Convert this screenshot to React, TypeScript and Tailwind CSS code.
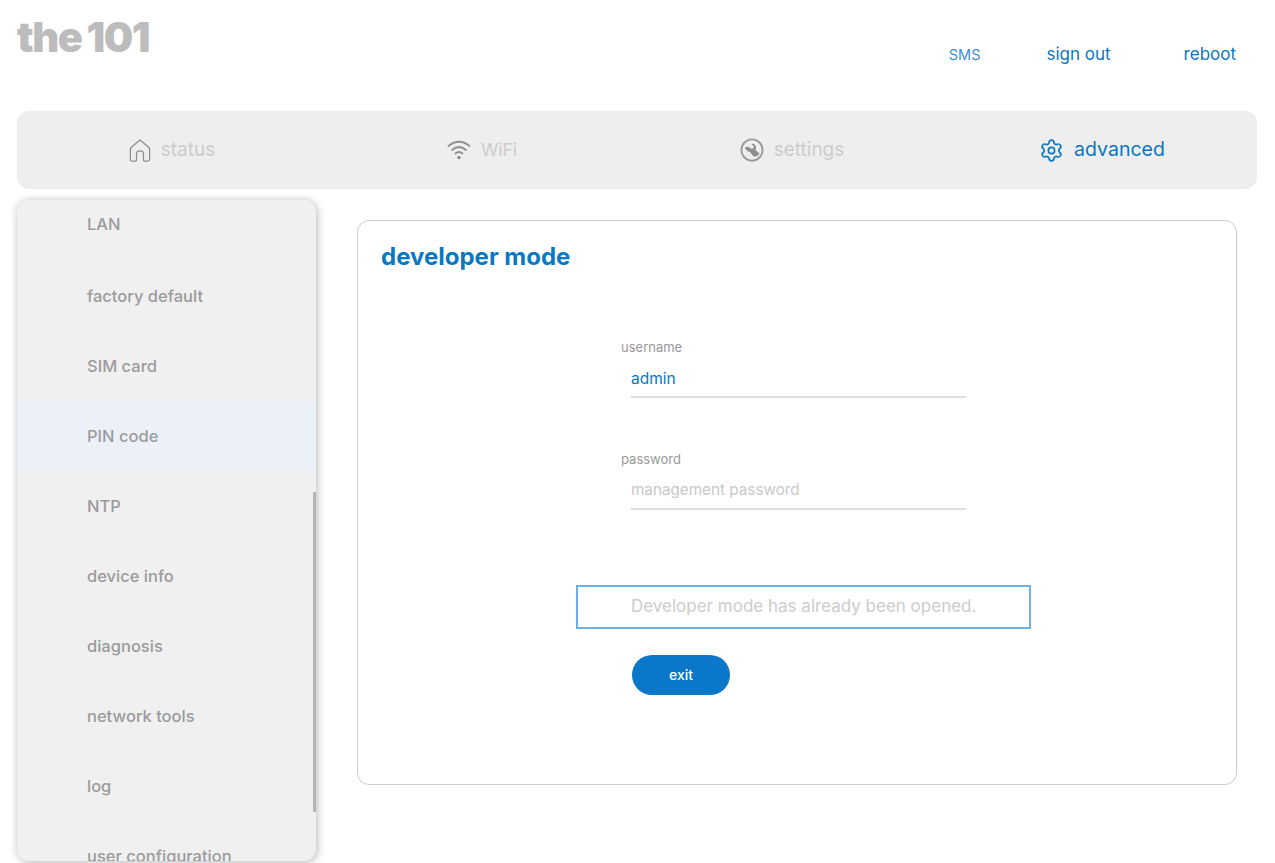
import { Settings } from "lucide-react";

const font = { fontFamily: '"Inter", "Open Sans", sans-serif' };

function HouseIcon() {
  return (
    <svg width="22" height="25" viewBox="0 0 24 26" fill="none" stroke="#8f8f8f" strokeWidth="1.4" strokeLinejoin="round" strokeLinecap="round">
      <path d="M12 1.5 L21.5 9.5 Q22.5 10.5 22.5 12 V22.5 Q22.5 24.5 20.5 24.5 H17 Q15.8 24.5 15.8 23.3 V16.5 Q15.8 13.5 12 13.5 Q8.2 13.5 8.2 16.5 V23.3 Q8.2 24.5 7 24.5 H3.5 Q1.5 24.5 1.5 22.5 V12 Q1.5 10.5 2.5 9.5 Z" />
    </svg>
  );
}

function WifiIcon() {
  return (
    <svg width="24" height="22" viewBox="0 0 24 22" fill="none" stroke="#8f8f8f" strokeWidth="1.8" strokeLinecap="round">
      <path d="M1.5 7 Q12 -1.5 22.5 7" />
      <path d="M5 11 Q12 5 19 11" />
      <path d="M8.5 14.5 Q12 11.5 15.5 14.5" />
      <circle cx="12" cy="18.5" r="1.8" fill="#8f8f8f" stroke="none" />
    </svg>
  );
}

function WrenchIcon() {
  return (
    <svg width="24" height="24" viewBox="0 0 24 24" fill="none">
      <circle cx="12" cy="12" r="10.6" stroke="#9a9a9a" strokeWidth="1.8" />
      <path d="M5 10 Q6.5 13.5 10 14 L13.5 18.5 Q17.5 19 19.5 15.5 L15.5 12 Q17 8.5 14.5 6.5 Q13 5.5 11.5 6 L14 9 L12 11 L8.5 9 Q5.5 8.2 5 10 Z" fill="#8f8f8f" />
    </svg>
  );
}

function NavItem({ icon, label, active = false, size = "text-[19px]" }: { icon: React.ReactNode; label: string; active?: boolean; size?: string }) {
  return (
    <div className="flex items-center justify-center gap-[10px]">
      {icon}
      <span className={`${size} ${active ? "text-[#0a77c2]" : "text-[#cccccc]"}`}>{label}</span>
    </div>
  );
}

const items = ["LAN", "factory default", "SIM card", "PIN code", "NTP", "device info", "diagnosis", "network tools", "log", "user configuration"];

function MenuRow({ label }: { label: string }) {
  const active = label === "PIN code";
  const first = label === "LAN";
  return (
    <div className={`flex items-center pl-[70px] text-[16.5px] font-medium text-[#9b9b9b] ${first ? "h-[72px] pb-[2px]" : "h-[70px]"} ${active ? "bg-[#ebf1f7]" : ""}`}>
      {label}
    </div>
  );
}

export default function App() {
  return (
    <div className="h-[863px] overflow-hidden bg-white" style={font}>
      <header className="flex h-[111px] justify-between pl-[17px] pr-[39px]">
        <div className="mt-[13px] flex h-[50px] items-center text-[41.5px] font-black leading-none tracking-[-1.5px] text-[#bcbcbc]">
          the<span className="ml-[5px]">101</span>
        </div>
        <nav className="mt-[44px] flex h-[22px] items-center text-[#0a77c2]">
          <span className="text-[14.5px] text-[#3b8fd3]">SMS</span>
          <span className="ml-[66px] text-[17px]">sign out</span>
          <span className="ml-[73px] text-[17px]">reboot</span>
        </nav>
      </header>

      <div className="mx-[17px] grid h-[78px] w-[1240px] grid-cols-4 rounded-xl bg-[#eeeeee]">
        <NavItem icon={<HouseIcon />} label="status" />
        <NavItem icon={<WifiIcon />} label="WiFi" size="text-[17.5px]" />
        <NavItem icon={<WrenchIcon />} label="settings" />
        <NavItem icon={<Settings size={25} strokeWidth={1.6} color="#0a77c2" />} label="advanced" active size="text-[19.5px]" />
      </div>

      <div className="ml-[17px] mt-[11px] flex items-start">
        <aside className="relative h-[661px] w-[299px] shrink-0 overflow-hidden rounded-xl bg-[#f0f0f0] shadow-[1px_1px_8px_rgba(0,0,0,0.3)]">
          <div className="-mt-[11px]">
            {items.map((label) => (
              <MenuRow key={label} label={label} />
            ))}
          </div>
          <div className="absolute right-0 top-[292px] h-[320px] w-[3px] bg-[#b5b5b5]" />
        </aside>

        <main className="ml-[41px] mt-[20px] h-[565px] w-[880px] rounded-xl border border-[#cccccc] bg-white">
          <h1 className="ml-[23px] mt-[20px] text-[24px] font-bold leading-[32px] text-[#0a77c2]">developer mode</h1>

          <form className="ml-[263px] mt-[64px] flex flex-col items-start">
            <label className="text-[13px] leading-[20px] text-[#999999]">username</label>
            <div className="ml-[10px] mt-[8px] flex h-[33px] w-[335px] items-center border-b-2 border-[#dddddd] pb-[4px] text-[15.5px] text-[#0a77c2]">
              admin
            </div>
            <label className="mt-[51px] text-[13px] leading-[20px] text-[#999999]">password</label>
            <div className="ml-[10px] mt-[8px] flex h-[33px] w-[335px] items-center border-b-2 border-[#dddddd] pb-[4px] text-[15.25px] text-[#c9c9c9]">
              management password
            </div>
            <div className="-ml-[45px] mt-[75px] flex h-[44px] w-[455px] items-center border-2 border-[#6eb0e6] pl-[53px] text-[17px] text-[#cccccc]">
              Developer mode has already been opened.
            </div>
            <button type="button" className="ml-[11px] mt-[26px] h-[40px] w-[98px] rounded-[20px] bg-[#0a77c8] pb-[2px] text-[14px] font-medium text-white">
              exit
            </button>
          </form>
        </main>
      </div>
    </div>
  );
}
